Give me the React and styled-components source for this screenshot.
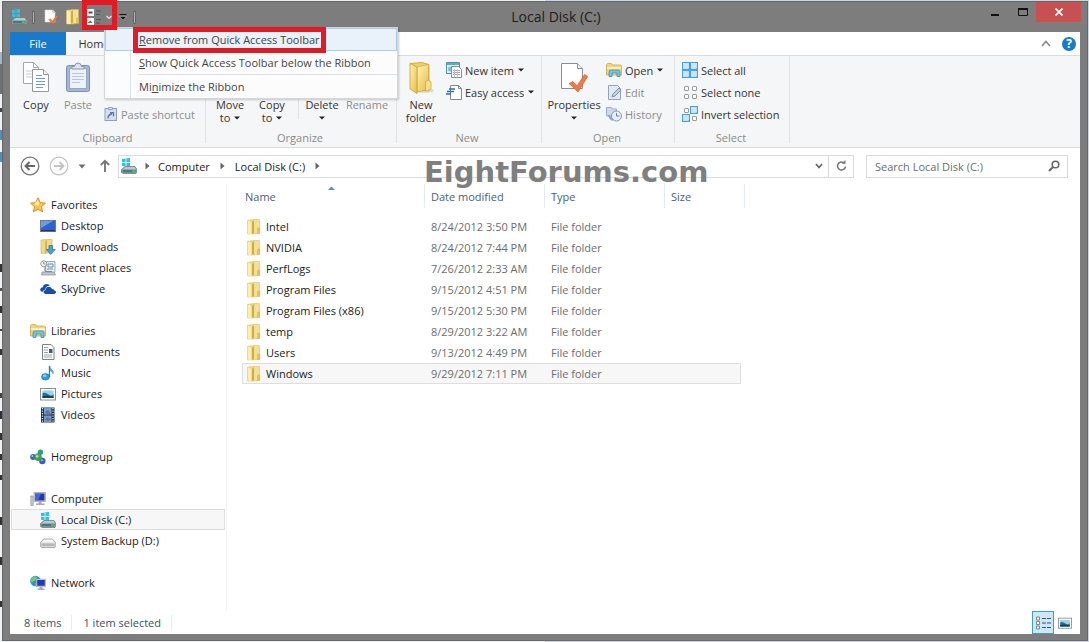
import styled, { createGlobalStyle, css } from 'styled-components';

const GlobalStyle = createGlobalStyle`
  * {
    box-sizing: border-box;
  }

  body {
    margin: 0;
    font-family: 'Open Sans', 'Noto Sans', sans-serif;
    font-size: 11px;
    color: #1e1e1e;
  }

  button,
  input {
    font: inherit;
    color: inherit;
  }

  svg {
    display: block;
    flex-shrink: 0;
  }
`;

// slivers of the window behind, [y, height, colour]
const SLIVERS = [
  [52, 12, '#9bb8cf'],
  [64, 30, '#6f7275'],
  [108, 4, '#444'],
  [130, 10, '#4d8fc4'],
  [152, 10, '#4d8fc4'],
  [264, 8, '#333'],
  [288, 3, '#555'],
  [306, 7, '#333'],
  [329, 2, '#444'],
  [349, 6, '#333'],
  [393, 5, '#444'],
  [411, 8, '#234'],
  [433, 7, '#333'],
  [454, 6, '#333'],
  [475, 5, '#333'],
  [517, 8, '#333'],
  [557, 8, '#333'],
  [601, 6, '#333'],
];

const Desktop = styled.div`
  min-height: 100vh;
  display: flex;
  padding: 1px 1px 1px 2px;
  background:
    ${SLIVERS.map(([y, h, color]) => `linear-gradient(${color}, ${color}) 0 ${y}px / 2px ${h}px no-repeat`).join(', ')},
    linear-gradient(90deg, #eef1f4 50%, #c9d6e6 50%);
`;

const Window = styled.div`
  flex: 1;
  min-width: 0;
  display: flex;
  flex-direction: column;
  padding: 0 7px 6px;
  border: 1px solid #666;
  background: #7d7d7d;
`;

const IconButton = styled.button`
  display: flex;
  align-items: center;
  justify-content: center;
  padding: 0;
  border: none;
  background: none;
`;

/* title bar */

const TitleBar = styled.header`
  display: grid;
  grid-template-columns: 1fr auto 1fr;
  height: 30px;
`;

const QuickAccess = styled.div`
  display: flex;
  align-items: center;
  padding-left: 1px;
`;

const QuickButton = styled(IconButton)`
  width: 16px;
  height: 28px;
  margin-right: ${(props) => props.$gap || 0}px;
`;

const Divider = styled.span`
  width: 3px;
  height: 13px;
  margin: 0 8px 0 5px;
  border: 1px solid #666;
  background: #adadad;
`;

const MenuAnchor = styled.div`
  position: relative;
  align-self: stretch;
  width: 35px;
  display: flex;
  align-items: center;
`;

const SplitButton = styled(IconButton)`
  flex: 1;
  gap: 3px;
  height: 28px;
`;

const marker = css`
  content: '';
  position: absolute;
  z-index: 3;
  box-sizing: border-box;
  border: 5px solid #e01b26;
  pointer-events: none;
`;

const MarkedAnchor = styled(MenuAnchor)`
  &::after {
    ${marker}
    inset: -2px 0 2px;
  }
`;

const Title = styled.h1`
  margin: 0;
  padding-left: 22px;
  font-size: 14px;
  font-weight: 400;
  line-height: 29px;
  color: #1c1c1c;
`;

const Controls = styled.div`
  display: flex;
  justify-content: flex-end;
  align-items: flex-start;
`;

const ControlButton = styled(IconButton)`
  width: 27px;
  height: 20px;
`;

const CloseButton = styled(ControlButton)`
  width: 45px;
  margin-right: -1px;
  background: #c75050;
`;

/* context menu */

const Menu = styled.ul`
  position: absolute;
  z-index: 2;
  top: 25px;
  left: 22px;
  width: 294px;
  margin: 0;
  padding: 0;
  list-style: none;
  border: 1px solid #d3d6da;
  background: linear-gradient(90deg, #fbfcfd 25px, #dde1e6 25px, #dde1e6 26px, #fcfcfd 26px);
  box-shadow: 1px 1px 2px rgba(0, 0, 0, 0.2);
`;

const MenuItem = styled.button`
  position: relative;
  display: block;
  width: 100%;
  height: 23px;
  padding: 0 0 0 33px;
  border: 1px solid ${(props) => (props.$active ? '#a9cde6' : 'transparent')};
  background: ${(props) => (props.$active ? '#e9f1fb' : 'none')};
  color: #444;
  line-height: 21px;
  text-align: left;
  white-space: nowrap;
`;

const MarkedLabel = styled.span`
  &::after {
    ${marker}
    top: -2px;
    bottom: -3px;
    left: 27px;
    width: 193px;
  }
`;

const MenuLine = styled.li`
  height: 1px;
  margin-left: 33px;
  background: #dde1e6;
`;

/* ribbon */

const TabRow = styled.nav`
  display: flex;
  align-items: stretch;
  height: 24px;
  border-bottom: 1px solid #dadbdc;
  background: #fff;
`;

const Tab = styled.button`
  width: 56px;
  padding: 0;
  border: none;
  background: ${(props) => (props.$file ? '#1979ca' : '#f5f6f7')};
  color: ${(props) => (props.$file ? '#fff' : '#333')};
`;

const TabTools = styled.div`
  display: flex;
  align-items: center;
  gap: 11px;
  margin-left: auto;
  padding-right: 4px;
`;

const HelpButton = styled(IconButton)`
  width: 14px;
  height: 14px;
  border-radius: 50%;
  background: #1979ca;
  color: #fff;
  font-size: 12px;
  font-weight: 700;
  line-height: 14px;
`;

const Ribbon = styled.div`
  display: flex;
  height: 92px;
  border-bottom: 1px solid #dadbdc;
  background: #f5f6f7;
`;

const Group = styled.section`
  display: flex;
  flex-direction: column;
  flex-shrink: 0;
  width: ${(props) => props.$width}px;
  padding: 3px 0 0 ${(props) => props.$left || 3}px;
  background: linear-gradient(#e0e2e4, #e0e2e4) right top / 1px 87px no-repeat;
`;

const GroupBody = styled.div`
  display: flex;
  height: 71px;
`;

const GroupName = styled.div`
  padding-right: 6px;
  line-height: 16px;
  text-align: center;
  color: #8a8a8a;
`;

const LargeButton = styled.button`
  display: flex;
  flex-direction: column;
  align-items: center;
  gap: 2px;
  width: ${(props) => props.$width || 42}px;
  padding: 3px 0 0;
  border: none;
  background: none;
  color: ${(props) => (props.disabled ? '#8c8c8c' : '#333')};
  line-height: 13px;
`;

const IconSlot = styled.span`
  display: flex;
  justify-content: center;
  height: 34px;
`;

const WithArrow = styled.span`
  display: flex;
  align-items: center;
  justify-content: center;
  gap: 4px;
  min-height: 13px;
`;

const BodyLine = styled.span`
  width: 1px;
  height: 60px;
  margin-left: 5px;
  background: #e0e2e4;
`;

const SmallList = styled.div`
  display: flex;
  flex-direction: column;
  padding-left: ${(props) => props.$left || 3}px;
`;

const SmallButton = styled.button`
  display: flex;
  align-items: center;
  gap: 3px;
  height: 22px;
  padding: 0;
  border: none;
  background: none;
  color: ${(props) => (props.disabled ? '#8c8c8c' : '#333')};
  white-space: nowrap;
`;

/* address row */

const AddressRow = styled.div`
  position: relative;
  display: flex;
  align-items: center;
  height: 36px;
  padding: 0 12px 0 10px;
  background: #fff;
`;

const HistoryButtons = styled.div`
  display: flex;
  align-items: center;
  gap: 9px;
  width: 98px;
`;

const AddressBar = styled.div`
  flex: 1;
  display: flex;
  align-items: center;
  height: 23px;
  padding-left: 2px;
  border: 1px solid #d9d9d9;
  line-height: 21px;
`;

const Crumb = styled.a`
  color: #1a1a1a;
  text-decoration: none;
`;

const CrumbArrow = styled.span`
  display: flex;
  justify-content: center;
  width: ${(props) => props.$width || 25}px;
`;

const AddressTools = styled.div`
  display: flex;
  align-self: stretch;
  margin-left: auto;

  button + button {
    border-left: 1px solid #d9d9d9;
  }
`;

const ToolButton = styled(IconButton)`
  width: ${(props) => props.$width || 25}px;
`;

const SearchBox = styled.label`
  display: flex;
  align-items: center;
  width: 202px;
  height: 23px;
  margin-left: 12px;
  padding: 0 7px 0 8px;
  border: 1px solid #d9d9d9;
`;

const SearchInput = styled.input`
  flex: 1;
  min-width: 0;
  padding: 0;
  border: none;
  outline: none;
  background: none;

  &::placeholder {
    color: #6d6d6d;
    opacity: 1;
  }
`;

const Watermark = styled.div`
  position: absolute;
  top: 6px;
  left: 414px;
  z-index: 1;
  font-family: 'DejaVu Sans', Verdana, sans-serif;
  font-size: 29px;
  font-weight: 700;
  line-height: 36px;
  color: #7f7f7f;
  pointer-events: none;
`;

/* main area */

const Main = styled.main`
  flex: 1;
  display: flex;
  background: #fff;
`;

const Pane = styled.aside`
  width: 217px;
  flex-shrink: 0;
  padding: 10px 1px 18px;
  border-right: 1px solid #f3f3f3;
`;

const PaneSection = styled.section`
  & + & {
    margin-top: 21px;
  }
`;

const PaneLink = styled.a`
  display: flex;
  align-items: center;
  gap: 5px;
  height: 21px;
  padding-left: ${(props) => (props.$child ? 28 : 18)}px;
  border: 1px solid ${(props) => (props.$selected ? '#dedede' : 'transparent')};
  background: ${(props) => (props.$selected ? '#f7f7f7' : 'none')};
  color: #1a1a1a;
  text-decoration: none;
`;

const Files = styled.div`
  flex: 1;
  min-width: 0;
  padding-left: 15px;
`;

const FileTable = styled.table`
  width: 499px;
  table-layout: fixed;
  border-collapse: separate;
  border-spacing: 0;
`;

const HeadCell = styled.th`
  position: relative;
  width: ${(props) => props.$width}px;
  height: 32px;
  padding: 3px 0 9px ${(props) => props.$left || 7}px;
  color: #4c607a;
  font-weight: 400;
  line-height: 20px;
  text-align: left;

  &::after {
    content: '';
    position: absolute;
    top: 0;
    right: ${(props) => (props.$last ? -4 : -1)}px;
    width: 1px;
    height: 24px;
    background: #e4ecf3;
  }
`;

const SortMark = styled.span`
  position: absolute;
  top: 2px;
  left: 86px;
`;

const Cell = styled.td`
  height: 21px;
  padding: 0 0 0 7px;
  color: #6d6d6d;
`;

const Row = styled.tr`
  ${(props) =>
    props.$selected &&
    css`
      ${Cell} {
        background: #f7f7f7;
        border-top: 1px solid #dedede;
        border-bottom: 1px solid #dedede;
      }
      ${Cell}:first-child {
        border-left: 1px solid #dedede;
        padding-left: 3px;
      }
      ${Cell}:last-child {
        border-right: 1px solid #dedede;
      }
    `}
`;

const NameCell = styled(Cell)`
  padding-left: 4px;
  color: #1a1a1a;
`;

const FileName = styled.div`
  display: flex;
  align-items: center;
  gap: 4px;
`;

const StatusBar = styled.footer`
  display: flex;
  align-items: center;
  height: 23px;
  padding: 0 4px 0 14px;
  background: #fff;
  color: #3b4f6b;
`;

const StatusText = styled.span`
  padding-right: 10px;
  margin-right: 11px;
  border-right: 1px solid #ececec;
`;

const ViewButtons = styled.div`
  display: flex;
  margin-left: auto;
`;

const ViewButton = styled(IconButton)`
  width: 22px;
  height: 23px;
  border: 1px solid ${(props) => (props.$on ? '#3f9fb4' : 'transparent')};
  background: ${(props) => (props.$on ? '#cce8f6' : 'none')};
`;

/* icons */

const Arrow = ({ fill = '#222' }) => (
  <svg width="6" height="4" viewBox="0 0 6 4">
    <path d="M0 0.5h6L3 3.5z" fill={fill} />
  </svg>
);

const Right = () => (
  <svg width="5" height="8" viewBox="0 0 5 8">
    <path d="M0.5 0.5v7L4.5 4z" fill="#666" />
  </svg>
);

const DriveIcon = ({ plain }) => (
  <svg width="16" height="16" viewBox="0 0 16 16">
    {!plain && (
      <path d="M1 1l3.6-.6V4H1zM5.4.3L9 0v4H5.4zM1 4.8h3.6v3.6L1 7.8zM5.4 4.8H9v4l-3.6-.4z" fill="#2fc0ea" />
    )}
    <path
      d={plain ? 'M3.5 6h9L16 10v3.5l-1 1H1.2l-1-1V10z' : 'M4 8.5h10l2 3v3l-1 1H2l-1.5-1v-3z'}
      fill={plain ? '#d8d9da' : '#9aa7a9'}
      stroke={plain ? '#929292' : '#66777a'}
      strokeWidth="0.7"
    />
    <path d={plain ? 'M3.8 6.8h8.4l2.3 2.6H1.5z' : 'M4.4 9.1h9.1l1.2 2H2.4z'} fill={plain ? '#f7f7f7' : '#bcc8ca'} />
    <rect x="1.6" y={plain ? 10.6 : 12} width="13" height="2.4" rx="0.6" fill={plain ? '#b8b8b8' : '#437b84'} />
    {!plain && <path d="M11 12.5h3v1.3h-3z" fill="#58d455" />}
  </svg>
);

const FolderIcon = ({ size = 16 }) => (
  <svg width={size} height={size} viewBox="0 0 16 16">
    <path d="M1.500 1.200L8 .5h5.500V14L8 15H1.500z" fill="#f0da84" stroke="#d9bd5c" strokeWidth="0.500" />
    <path d="M1.800 1.500l4 1.500v12.200l-4-.7z" fill="#faeeb2" />
    <path d="M5.800 3l2.400-2v12.800l-2.400 1.500z" fill="#d2ae42" />
    <path d="M8.200 1H13v13H8.200z" fill="#f3e094" />
    <path d="M11.500 9.500l1-.7 1.300.7v5h-2.300z" fill="#e3c35a" stroke="#cda93f" strokeWidth="0.400" />
  </svg>
);

const NewFolderIcon = () => (
  <svg width="28" height="34" viewBox="0 0 28 34">
    <defs>
      <linearGradient id="folderFront" x1="0" x2="1" y1="0" y2="1">
        <stop offset="0" stopColor="#fff4b8" />
        <stop offset="1" stopColor="#e6bd46" />
      </linearGradient>
    </defs>
    <ellipse cx="17" cy="28.500" rx="10" ry="2.500" fill="#d9dadb" />
    <path d="M3 1.500L15 .5l7 2v26H8z" fill="#f0cf62" stroke="#c9a12f" strokeWidth="0.800" />
    <path d="M10 5l11.500-2.500v25L10 30z" fill="url(#folderFront)" stroke="#d1a937" strokeWidth="0.700" />
    <path d="M3 1.500L10 5v26.500L3 27z" fill="url(#folderFront)" stroke="#c9a12f" strokeWidth="0.800" />
    <path d="M18.500 19.500l3-1.500 2.500 2v7l-3 2h-2.500z" fill="#f6de82" stroke="#c9a12f" strokeWidth="0.700" />
  </svg>
);

const CheckPage = ({ width, height }) => (
  <svg width={width} height={height} viewBox="0 0 28 34">
    <path d="M1.500 1.500h16l5 5v20h-21z" fill="#fff" stroke="#8b8d90" />
    <path d="M17.500 1.500v5h5" fill="#eef0f2" stroke="#8b8d90" />
    <path d="M9 21.500l4-2 4 4.500 7.500-11.500 3.200 2L18 30z" fill="#ee7b45" stroke="#d4602c" strokeWidth="0.700" />
  </svg>
);

const CopyIcon = () => (
  <svg width="28" height="34" viewBox="0 0 28 34">
    <path d="M1.500 .5h10l5 5v16h-15z" fill="#fff" stroke="#a3a7ab" />
    <path d="M11.500 .5v5h5" fill="none" stroke="#a3a7ab" />
    <path d="M4 9h7M4 12h6M4 15h6" stroke="#c4ccd4" />
    <path d="M10.500 7.500h11l5 5v17h-16z" fill="#fff" stroke="#94989c" />
    <path d="M21.500 7.500v5h5" fill="#f0f1f2" stroke="#94989c" />
    <path d="M14 13.500h6M14 16.500h9M14 19.500h9M14 22.500h9M14 25.500h7" stroke="#6f9cc0" />
  </svg>
);

const PasteIcon = () => (
  <svg width="26" height="34" viewBox="0 0 26 34">
    <rect x="1.500" y="3.500" width="23" height="26" rx="2" fill="#a5b5d3" stroke="#7e91b8" />
    <rect x="4.500" y="6.500" width="17" height="20" fill="#eef3fa" stroke="#95a6c6" />
    <path d="M7 7V4.500h2.500Q10 1 13 1t3.500 3.500H19V7z" fill="#dde4ee" stroke="#8797b5" />
    <path d="M7 11.500h12M7 14.500h12M7 17.500h12M7 20.500h8" stroke="#b5c6de" />
  </svg>
);

const PasteShortcutIcon = () => (
  <svg width="14" height="16" viewBox="0 0 14 16">
    <rect x="1" y="2.500" width="11.500" height="12" fill="#d5deed" stroke="#8fa0be" />
    <path d="M4.500 3.500v-2h4v2z" fill="#eef2f8" stroke="#8fa0be" />
    <path d="M4 12.500q0-4 4-4.500M6 6.800h3.500v3.500" fill="none" stroke="#5d7ba8" strokeWidth="1.400" />
  </svg>
);

const CopyPathIcon = () => (
  <svg width="16" height="12" viewBox="0 0 16 12">
    <rect x="0.500" y="1.500" width="14" height="9" fill="#e6f1fa" stroke="#4ba0cf" />
  </svg>
);

const NewItemIcon = () => (
  <svg width="16" height="16" viewBox="0 0 16 16">
    <path d="M.5.500h13v11H.5z" fill="#d9eef5" stroke="#5695ac" />
    <path d="M1 1h12v2H1z" fill="#63a9bf" />
    <circle cx="4.500" cy="7" r="2.500" fill="#79c3d6" />
    <path d="M5.500 4.500h7l3 3v8h-10z" fill="#fff" stroke="#8b8d90" />
    <path d="M7 8.500h7M7 10.500h7M7 12.500h7" stroke="#9aa5b1" />
    <path d="M8.500 7v8M11.500 7v8" stroke="#c3ccd6" />
  </svg>
);

const EasyAccessIcon = () => (
  <svg width="16" height="16" viewBox="0 0 16 16">
    <path d="M4.500 1.500h8l3 3v11h-11z" fill="#fff" stroke="#85888c" />
    <path d="M12.500 1.500v3h3" fill="none" stroke="#85888c" />
    <path d="M3 5h6M1 7.500h7M0 10h5" stroke="#2c6fb5" strokeWidth="1.300" />
  </svg>
);

const LibraryIcon = () => (
  <svg width="16" height="16" viewBox="0 0 16 16">
    <path d="M.5 13V2.500l1-1h4l1 1.500h8l1 1V13z" fill="#f0d57a" stroke="#c9a748" strokeWidth="0.800" />
    <path d="M1 5h14v2H1z" fill="#fbf0bd" />
    <path d="M3 14.500V10q0-2 2-2h7q2 0 2 2v4.500h-3V11H6v3.500z" fill="#72c5e6" stroke="#3d8fb5" strokeWidth="0.800" />
  </svg>
);

const EditIcon = () => (
  <svg width="16" height="16" viewBox="0 0 16 16">
    <path d="M2.500 1.500h9l3 3v11h-12z" fill="#e3e9f4" stroke="#93a2be" />
    <path d="M6 13l1-3 6-6 2 2-6 6z" fill="#c3cfe4" stroke="#7d90b4" />
  </svg>
);

const HistoryIcon = () => (
  <svg width="16" height="16" viewBox="0 0 16 16">
    <path d="M.5 1.500h5l1 1.500h4v7h-10z" fill="#cfd9ea" stroke="#9aaccb" />
    <circle cx="10.500" cy="10" r="5" fill="#e8eef7" stroke="#8698bb" />
    <path d="M10.500 7v3h3" fill="none" stroke="#6c81aa" />
    <path d="M3 9q1 4 4 5" fill="none" stroke="#8ca3cc" strokeWidth="2" />
  </svg>
);

const GRID_CELLS = [
  [0, 0],
  [8, 0],
  [0, 8],
  [8, 8],
];

const SelectIcon = ({ on }) => (
  <svg width="16" height="16" viewBox="0 0 16 16">
    {GRID_CELLS.map(([x, y], i) =>
      on[i] ? (
        <g key={i}>
          <rect x={x} y={y} width="8" height="8" fill="#4a9fe0" />
          <rect x={x + 1.5} y={y + 1.5} width="5" height="5" fill="#c8e7fc" stroke="#fff" strokeWidth="0.500" />
        </g>
      ) : (
        <rect key={i} x={x + 2.5} y={y + 2.5} width="4" height="4" rx="0.500" fill="#fff" stroke="#9a9a9a" />
      )
    )}
  </svg>
);

const StarIcon = () => (
  <svg width="16" height="16" viewBox="0 0 16 16">
    <path
      d="M8 .8l2.200 4.800 5.200.6-3.900 3.500 1.100 5.200L8 12.300l-4.600 2.600 1.100-5.200L.6 6.200l5.200-.6z"
      fill="#fbc649"
      stroke="#df8a2d"
    />
    <path d="M8 3l1.300 3.500L8 9 4 7z" fill="#fde9a2" />
  </svg>
);

const DesktopIcon = () => (
  <svg width="16" height="16" viewBox="0 0 16 16">
    <rect x="0.500" y="2.500" width="15" height="11" fill="#2f63c7" stroke="#6d7b90" />
    <path d="M1 3h12L1 10z" fill="#6e9be8" />
    <path d="M1 12h14v1.200H1z" fill="#23355f" />
  </svg>
);

const DownloadsIcon = () => (
  <svg width="16" height="16" viewBox="0 0 16 16">
    <path d="M1 1l5-.5h6V14H6l-5 .5z" fill="#f0da86" stroke="#cfb04e" strokeWidth="0.600" />
    <path d="M5 2v13l2-1.500V1z" fill="#d8b64b" />
    <path d="M9 6.500h3.500v4h2.700L10.700 15.500 6.500 10.500H9z" fill="#3ea4e6" stroke="#1e6ea8" strokeWidth="0.700" />
  </svg>
);

const RecentIcon = () => (
  <svg width="16" height="16" viewBox="0 0 16 16">
    <path d="M5 1.500h10v10l-1 2H6z" fill="#e6edf3" stroke="#8d99a6" strokeWidth="0.800" />
    <path d="M2 12h12l1.500 3h-14z" fill="#c2c6ca" stroke="#8c9095" strokeWidth="0.700" />
    <path d="M8 4h5v3H8zM7 9h6" fill="none" stroke="#6f94b5" />
    <path d="M5 7v4.500h7" fill="none" stroke="#7d8c9b" />
    <circle cx="3.800" cy="3.800" r="3" fill="#f6f7f8" stroke="#8f959b" />
    <path d="M3.800 2v2h1.500" fill="none" stroke="#666" strokeWidth="0.800" />
  </svg>
);

const SkyDriveIcon = () => (
  <svg width="16" height="16" viewBox="0 0 16 16">
    <path d="M2.500 11Q-.3 10.500.3 8q.5-1.700 2.500-1.700Q3.500 3 6.800 3q2.200 0 3.200 1.800-4.500-.2-4.700 3.700Q3 9 2.500 11z" fill="#1a4fa8" />
    <path d="M5.500 13q-2-.3-2-2 0-1.700 2-2 .3-3.200 3.200-3.300 2.500 0 3.300 2.300 2-.3 2.500 1.500 1.700.3 1.500 2-.2 1.400-2 1.500z" fill="#1a4fa8" />
  </svg>
);

const DocumentIcon = () => (
  <svg width="16" height="16" viewBox="0 0 16 16">
    <path d="M2.500.5h8.500l3 3v12H2.500z" fill="#fff" stroke="#7c8289" />
    <path d="M4 3.500h4M4 6h4M4 8.500h4M4 11h8M4 13h8" stroke="#9ba3ab" />
    <path d="M9 5h3.500v4H9z" fill="#46596e" />
  </svg>
);

const MusicIcon = () => (
  <svg width="16" height="16" viewBox="0 0 16 16">
    <ellipse cx="5.500" cy="11.800" rx="4" ry="3.200" fill="#2e9be0" stroke="#1b6cab" strokeWidth="0.600" />
    <ellipse cx="4.700" cy="10.800" rx="1.800" ry="1.200" fill="#8fd0f6" />
    <path d="M9.500 12V.8" stroke="#2680c0" strokeWidth="1.300" />
    <path d="M10 1q.5 2.500 2.500 4t.8 4.500Q12 6.500 10 6z" fill="#5aa9da" />
  </svg>
);

const PictureIcon = ({ size = 16 }) => (
  <svg width={size} height={size} viewBox="0 0 16 16">
    <rect x="0.500" y="2.500" width="15" height="11.500" fill="#fff" stroke="#86909a" />
    <path d="M2.500 4.500h11v7.500h-11z" fill="#9ad0ea" />
    <path d="M2.500 7q3-1 6 1.500t5-.5v4h-11z" fill="#23748a" />
    <path d="M2.500 10.300q5-1 11 .2V12h-11z" fill="#183f58" />
  </svg>
);

const VideoIcon = () => (
  <svg width="16" height="16" viewBox="0 0 16 16">
    <path d="M1 .5h13.500v15H1z" fill="#20303d" />
    <path d="M4 1h7.500v6.500H4zM4 8.500h7.500V15H4z" fill="#5da3dd" />
    <path d="M5 5l3-2 3 4.500H8zM4.500 13l3-3 3.500 2-2 2z" fill="#a05a6d" />
    <path d="M2.500 1v14M13 1v14" stroke="#e3e9ed" strokeWidth="1.200" strokeDasharray="1.300 1.200" />
  </svg>
);

const HomegroupIcon = () => (
  <svg width="16" height="16" viewBox="0 0 16 16">
    <path d="M3 8l7-5 2 9z" fill="none" stroke="#8fb4d8" strokeWidth="2" />
    <circle cx="10.500" cy="3.300" r="2.700" fill="#2e9e83" />
    <circle cx="3" cy="8" r="2.900" fill="#3e68bd" />
    <circle cx="12.300" cy="12" r="3.200" fill="#3d5cc2" />
    <circle cx="8" cy="8.500" r="3.400" fill="#39a847" />
    <circle cx="7.200" cy="7.300" r="1.400" fill="#a8e59a" />
    <circle cx="2.300" cy="7" r="0.900" fill="#b7d0f6" />
    <circle cx="12" cy="11.200" r="1" fill="#a5baf2" />
  </svg>
);

const ComputerIcon = () => (
  <svg width="16" height="16" viewBox="0 0 16 16">
    <path d="M.8 5h2.400v9.500H.8z" fill="#c8ced3" stroke="#7f868c" strokeWidth="0.600" />
    <rect x="4" y="1.500" width="11.500" height="9" fill="#cdd3da" stroke="#8b949d" strokeWidth="0.600" />
    <path d="M5 2.500h9.500v7H5z" fill="#2536b3" />
    <path d="M5 2.500h6l-3 7H5z" fill="#4a63db" />
    <path d="M8.500 10.500h3v2h3v1.500H6v-1.500h2.500z" fill="#a4abb1" />
  </svg>
);

const NetworkIcon = () => (
  <svg width="16" height="16" viewBox="0 0 16 16">
    <circle cx="5.500" cy="6" r="5.300" fill="#2e93c4" />
    <path d="M3 1.800q3-1.500 4 .5T4.500 6 1 7 .5 4.500zM5 8.500l3-1v2.500l-2 1.200z" fill="#6fc97a" />
    <rect x="6.300" y="4" width="9.400" height="7.800" fill="#d4dae0" stroke="#8b949d" strokeWidth="0.500" />
    <path d="M7.200 5h7.600v5.800H7.200z" fill="#2438ba" />
    <path d="M9.500 12h3v1.500h2V15h-7v-1.500h2z" fill="#a4abb1" />
  </svg>
);

const ViewOptionsIcon = () => (
  <svg width="16" height="16" viewBox="0 0 16 16">
    <rect x="0" y="0" width="7" height="7" fill="#f2f5f7" />
    <rect x="0" y="9" width="7" height="7" fill="#f2f5f7" />
    <path d="M1.500 3.500h4" stroke="#49535e" strokeWidth="2" />
    <path d="M1 13.500l2.500-2 2 2.500H1z" fill="#3f8a3b" />
    <path d="M9 2h5M9 5.500h4M9 10.500h5M9 14h4" stroke="#50575e" />
  </svg>
);

const NAV = [
  {
    name: 'Favorites',
    icon: <StarIcon />,
    items: [
      ['Desktop', <DesktopIcon />],
      ['Downloads', <DownloadsIcon />],
      ['Recent places', <RecentIcon />],
      ['SkyDrive', <SkyDriveIcon />],
    ],
  },
  {
    name: 'Libraries',
    icon: <LibraryIcon />,
    items: [
      ['Documents', <DocumentIcon />],
      ['Music', <MusicIcon />],
      ['Pictures', <PictureIcon />],
      ['Videos', <VideoIcon />],
    ],
  },
  { name: 'Homegroup', icon: <HomegroupIcon />, items: [] },
  {
    name: 'Computer',
    icon: <ComputerIcon />,
    items: [
      ['Local Disk (C:)', <DriveIcon />],
      ['System Backup (D:)', <DriveIcon plain />],
    ],
  },
  { name: 'Network', icon: <NetworkIcon />, items: [] },
];

const FILES = [
  ['Intel', '8/24/2012 3:50 PM'],
  ['NVIDIA', '8/24/2012 7:44 PM'],
  ['PerfLogs', '7/26/2012 2:33 AM'],
  ['Program Files', '9/15/2012 4:51 PM'],
  ['Program Files (x86)', '9/15/2012 5:30 PM'],
  ['temp', '8/29/2012 3:22 AM'],
  ['Users', '9/13/2012 4:49 PM'],
  ['Windows', '9/29/2012 7:11 PM'],
];

const QuickMenu = () => (
  <Menu>
    <li>
      <MenuItem $active>
        <MarkedLabel>
          <u>R</u>emove from Quick Access Toolbar
        </MarkedLabel>
      </MenuItem>
    </li>
    <li>
      <MenuItem>
        <u>S</u>how Quick Access Toolbar below the Ribbon
      </MenuItem>
    </li>
    <MenuLine />
    <li>
      <MenuItem>
        Mi<u>n</u>imize the Ribbon
      </MenuItem>
    </li>
  </Menu>
);

const Large = ({ icon, label, second, arrow, ...rest }) => (
  <LargeButton {...rest}>
    <IconSlot>{icon}</IconSlot>
    <span>
      {label}
      {(second || arrow) && (
        <WithArrow>
          {second}
          {arrow && <Arrow />}
        </WithArrow>
      )}
    </span>
  </LargeButton>
);

const Small = ({ icon, label, arrow, disabled }) => (
  <SmallButton disabled={disabled}>
    {icon}
    <WithArrow>
      {label}
      {arrow && <Arrow />}
    </WithArrow>
  </SmallButton>
);

const App = () => {
  return (
    <Desktop>
      <GlobalStyle />
      <Window>
        <TitleBar>
          <QuickAccess>
            <DriveIcon />
            <Divider />
            <QuickButton $gap={6} aria-label="Properties">
              <CheckPage width="14" height="17" />
            </QuickButton>
            <QuickButton $gap={1} aria-label="New folder">
              <FolderIcon />
            </QuickButton>
            <MarkedAnchor>
              <SplitButton aria-label="View options">
                <ViewOptionsIcon />
                <svg width="6" height="5" viewBox="0 0 6 5">
                  <path d="M.5 1L3 3.500 5.500 1" fill="none" stroke="#dce9fa" strokeWidth="1.200" />
                </svg>
              </SplitButton>
              <QuickMenu />
            </MarkedAnchor>
            <IconButton aria-label="Customize Quick Access Toolbar">
              <svg width="11" height="8" viewBox="-1 0 10 8">
                <path d="M1 1.500h7" stroke="#111" />
                <path d="M1 3.500h7L4.500 7z" fill="#111" stroke="#ddd" strokeWidth="0.400" />
              </svg>
            </IconButton>
            <Divider />
          </QuickAccess>
          <Title>Local Disk (C:)</Title>
          <Controls>
            <ControlButton aria-label="Minimize">
              <svg width="9" height="10" viewBox="0 0 9 10">
                <path d="M0 7h8v2H0z" fill="#111" />
              </svg>
            </ControlButton>
            <ControlButton aria-label="Maximize">
              <svg width="10" height="8" viewBox="0 0 10 8">
                <path d="M0.500 1h9v6.500h-9z" fill="none" stroke="#111" />
                <path d="M0 1h10" stroke="#111" strokeWidth="2" />
              </svg>
            </ControlButton>
            <CloseButton aria-label="Close">
              <svg width="8" height="8" viewBox="0 0 8 8">
                <path d="M0.500 0.500l7 7M7.500 0.500l-7 7" stroke="#fff" strokeWidth="1.700" />
              </svg>
            </CloseButton>
          </Controls>
        </TitleBar>

        <TabRow>
          <Tab $file>File</Tab>
          <Tab>Home</Tab>
          <TabTools>
            <IconButton aria-label="Minimize the Ribbon">
              <svg width="10" height="7" viewBox="0 0 10 7">
                <path d="M1 6l4-4.500L9 6" fill="none" stroke="#888" strokeWidth="1.600" />
              </svg>
            </IconButton>
            <HelpButton>?</HelpButton>
          </TabTools>
        </TabRow>

        <Ribbon>
          <Group $width={196} $left={5}>
            <GroupBody>
              <Large icon={<CopyIcon />} label="Copy" />
              <Large icon={<PasteIcon />} label="Paste" disabled />
              <SmallList $left={5}>
                <SmallButton aria-label="Cut" />
                <SmallButton aria-label="Copy path">
                  <CopyPathIcon />
                </SmallButton>
                <Small icon={<PasteShortcutIcon />} label="Paste shortcut" disabled />
              </SmallList>
            </GroupBody>
            <GroupName>Clipboard</GroupName>
          </Group>

          <Group $width={191}>
            <GroupBody>
              <Large label="Move" second="to" arrow />
              <Large label="Copy" second="to" arrow />
              <BodyLine />
              <Large label="Delete" arrow $width={46} />
              <Large label="Rename" disabled $width={44} />
            </GroupBody>
            <GroupName>Organize</GroupName>
          </Group>

          <Group $width={145} $left={1}>
            <GroupBody>
              <Large icon={<NewFolderIcon />} label="New" second="folder" $width={46} />
              <SmallList $left={2}>
                <Small icon={<NewItemIcon />} label="New item" arrow />
                <Small icon={<EasyAccessIcon />} label="Easy access" arrow />
              </SmallList>
            </GroupBody>
            <GroupName>New</GroupName>
          </Group>

          <Group $width={133}>
            <GroupBody>
              <Large icon={<CheckPage width="28" height="34" />} label="Properties" arrow $width={58} />
              <SmallList>
                <Small icon={<LibraryIcon />} label="Open" arrow />
                <Small icon={<EditIcon />} label="Edit" disabled />
                <Small icon={<HistoryIcon />} label="History" disabled />
              </SmallList>
            </GroupBody>
            <GroupName>Open</GroupName>
          </Group>

          <Group $width={115}>
            <GroupBody>
              <SmallList $left={4}>
                <Small icon={<SelectIcon on={[1, 1, 1, 1]} />} label="Select all" />
                <Small icon={<SelectIcon on={[0, 0, 0, 0]} />} label="Select none" />
                <Small icon={<SelectIcon on={[0, 1, 1, 0]} />} label="Invert selection" />
              </SmallList>
            </GroupBody>
            <GroupName>Select</GroupName>
          </Group>
        </Ribbon>

        <AddressRow>
          <HistoryButtons>
            <IconButton aria-label="Back">
              <svg width="20" height="20" viewBox="0 0 20 20">
                <circle cx="10" cy="10" r="8.800" fill="none" stroke="#777" strokeWidth="1.300" />
                <path d="M15 10H6M9.500 6L5.500 10l4 4" fill="none" stroke="#666" strokeWidth="1.900" />
              </svg>
            </IconButton>
            <IconButton aria-label="Forward">
              <svg width="20" height="20" viewBox="0 0 20 20">
                <circle cx="10" cy="10" r="8.800" fill="none" stroke="#c4c4c4" strokeWidth="1.200" />
                <path d="M5 10h9M10.500 6l4 4-4 4" fill="none" stroke="#c4c4c4" strokeWidth="1.900" />
              </svg>
            </IconButton>
            <IconButton aria-label="Recent locations">
              <svg width="8" height="5" viewBox="0 0 8 5">
                <path d="M.5.500h7L4 4.500z" fill="#6f6f6f" />
              </svg>
            </IconButton>
            <IconButton aria-label="Up">
              <svg width="20" height="14" viewBox="0 0 20 14">
                <path d="M10 13V2M5.800 6L10 1.800 14.200 6" fill="none" stroke="#777" strokeWidth="1.900" />
              </svg>
            </IconButton>
          </HistoryButtons>
          <AddressBar>
            <DriveIcon />
            <CrumbArrow $width={21}>
              <Right />
            </CrumbArrow>
            <Crumb href="#computer">Computer</Crumb>
            <CrumbArrow>
              <Right />
            </CrumbArrow>
            <Crumb href="#c">Local Disk (C:)</Crumb>
            <CrumbArrow>
              <Right />
            </CrumbArrow>
            <AddressTools>
              <ToolButton $width={19} aria-label="Previous locations">
                <svg width="8" height="6" viewBox="0 0 8 6">
                  <path d="M1 1l3 3.500L7 1" fill="none" stroke="#666" strokeWidth="1.700" />
                </svg>
              </ToolButton>
              <ToolButton aria-label="Refresh">
                <svg width="11" height="12" viewBox="0 0 11 12">
                  <path d="M8.500 3.300A4 4 0 1 0 9.500 6.500" fill="none" stroke="#777" strokeWidth="1.500" />
                  <path d="M5.500 3.800h4V0z" fill="#777" />
                </svg>
              </ToolButton>
            </AddressTools>
          </AddressBar>
          <SearchBox>
            <SearchInput type="text" placeholder="Search Local Disk (C:)" aria-label="Search Local Disk (C:)" />
            <svg width="12" height="12" viewBox="0 0 12 12">
              <circle cx="7.500" cy="4.500" r="3.300" fill="none" stroke="#666" strokeWidth="1.500" />
              <path d="M5 7L1 11" stroke="#666" strokeWidth="2" />
            </svg>
          </SearchBox>
          <Watermark>EightForums.com</Watermark>
        </AddressRow>

        <Main>
          <Pane>
            {NAV.map((section) => (
              <PaneSection key={section.name}>
                <PaneLink href="#">
                  {section.icon}
                  {section.name}
                </PaneLink>
                {section.items.map(([name, icon]) => (
                  <PaneLink key={name} href="#" $child $selected={name === 'Local Disk (C:)'}>
                    {icon}
                    {name}
                  </PaneLink>
                ))}
              </PaneSection>
            ))}
          </Pane>
          <Files>
            <FileTable>
              <thead>
                <tr>
                  <HeadCell $width={182} $left={3}>
                    Name
                    <SortMark>
                      <svg width="7" height="4" viewBox="0 0 7 4">
                        <path d="M0 4L3.500 0.500 7 4z" fill="#5f8fa5" />
                      </svg>
                    </SortMark>
                  </HeadCell>
                  <HeadCell $width={120}>Date modified</HeadCell>
                  <HeadCell $width={120}>Type</HeadCell>
                  <HeadCell $last>Size</HeadCell>
                </tr>
              </thead>
              <tbody>
                {FILES.map(([name, date]) => (
                  <Row key={name} $selected={name === 'Windows'}>
                    <NameCell>
                      <FileName>
                        <FolderIcon />
                        {name}
                      </FileName>
                    </NameCell>
                    <Cell>{date}</Cell>
                    <Cell>File folder</Cell>
                    <Cell />
                  </Row>
                ))}
              </tbody>
            </FileTable>
          </Files>
        </Main>

        <StatusBar>
          <StatusText>8 items</StatusText>
          <StatusText>1 item selected</StatusText>
          <ViewButtons>
            <ViewButton $on aria-label="Details view">
              <svg width="16" height="14" viewBox="0 0 16 14">
                <path d="M1.500 1h3v3h-3zM1.500 5.500h3v3h-3zM1.500 10h3v3h-3z" fill="#fff" stroke="#7b8790" />
                <path d="M7 2.500h4M12 2.500h4M7 7h4M12 7h4M7 11.500h4M12 11.500h4" stroke="#3d5360" strokeWidth="1.200" />
              </svg>
            </ViewButton>
            <ViewButton aria-label="Large thumbnails view">
              <PictureIcon size={14} />
            </ViewButton>
          </ViewButtons>
        </StatusBar>
      </Window>
    </Desktop>
  );
};

export default App;
